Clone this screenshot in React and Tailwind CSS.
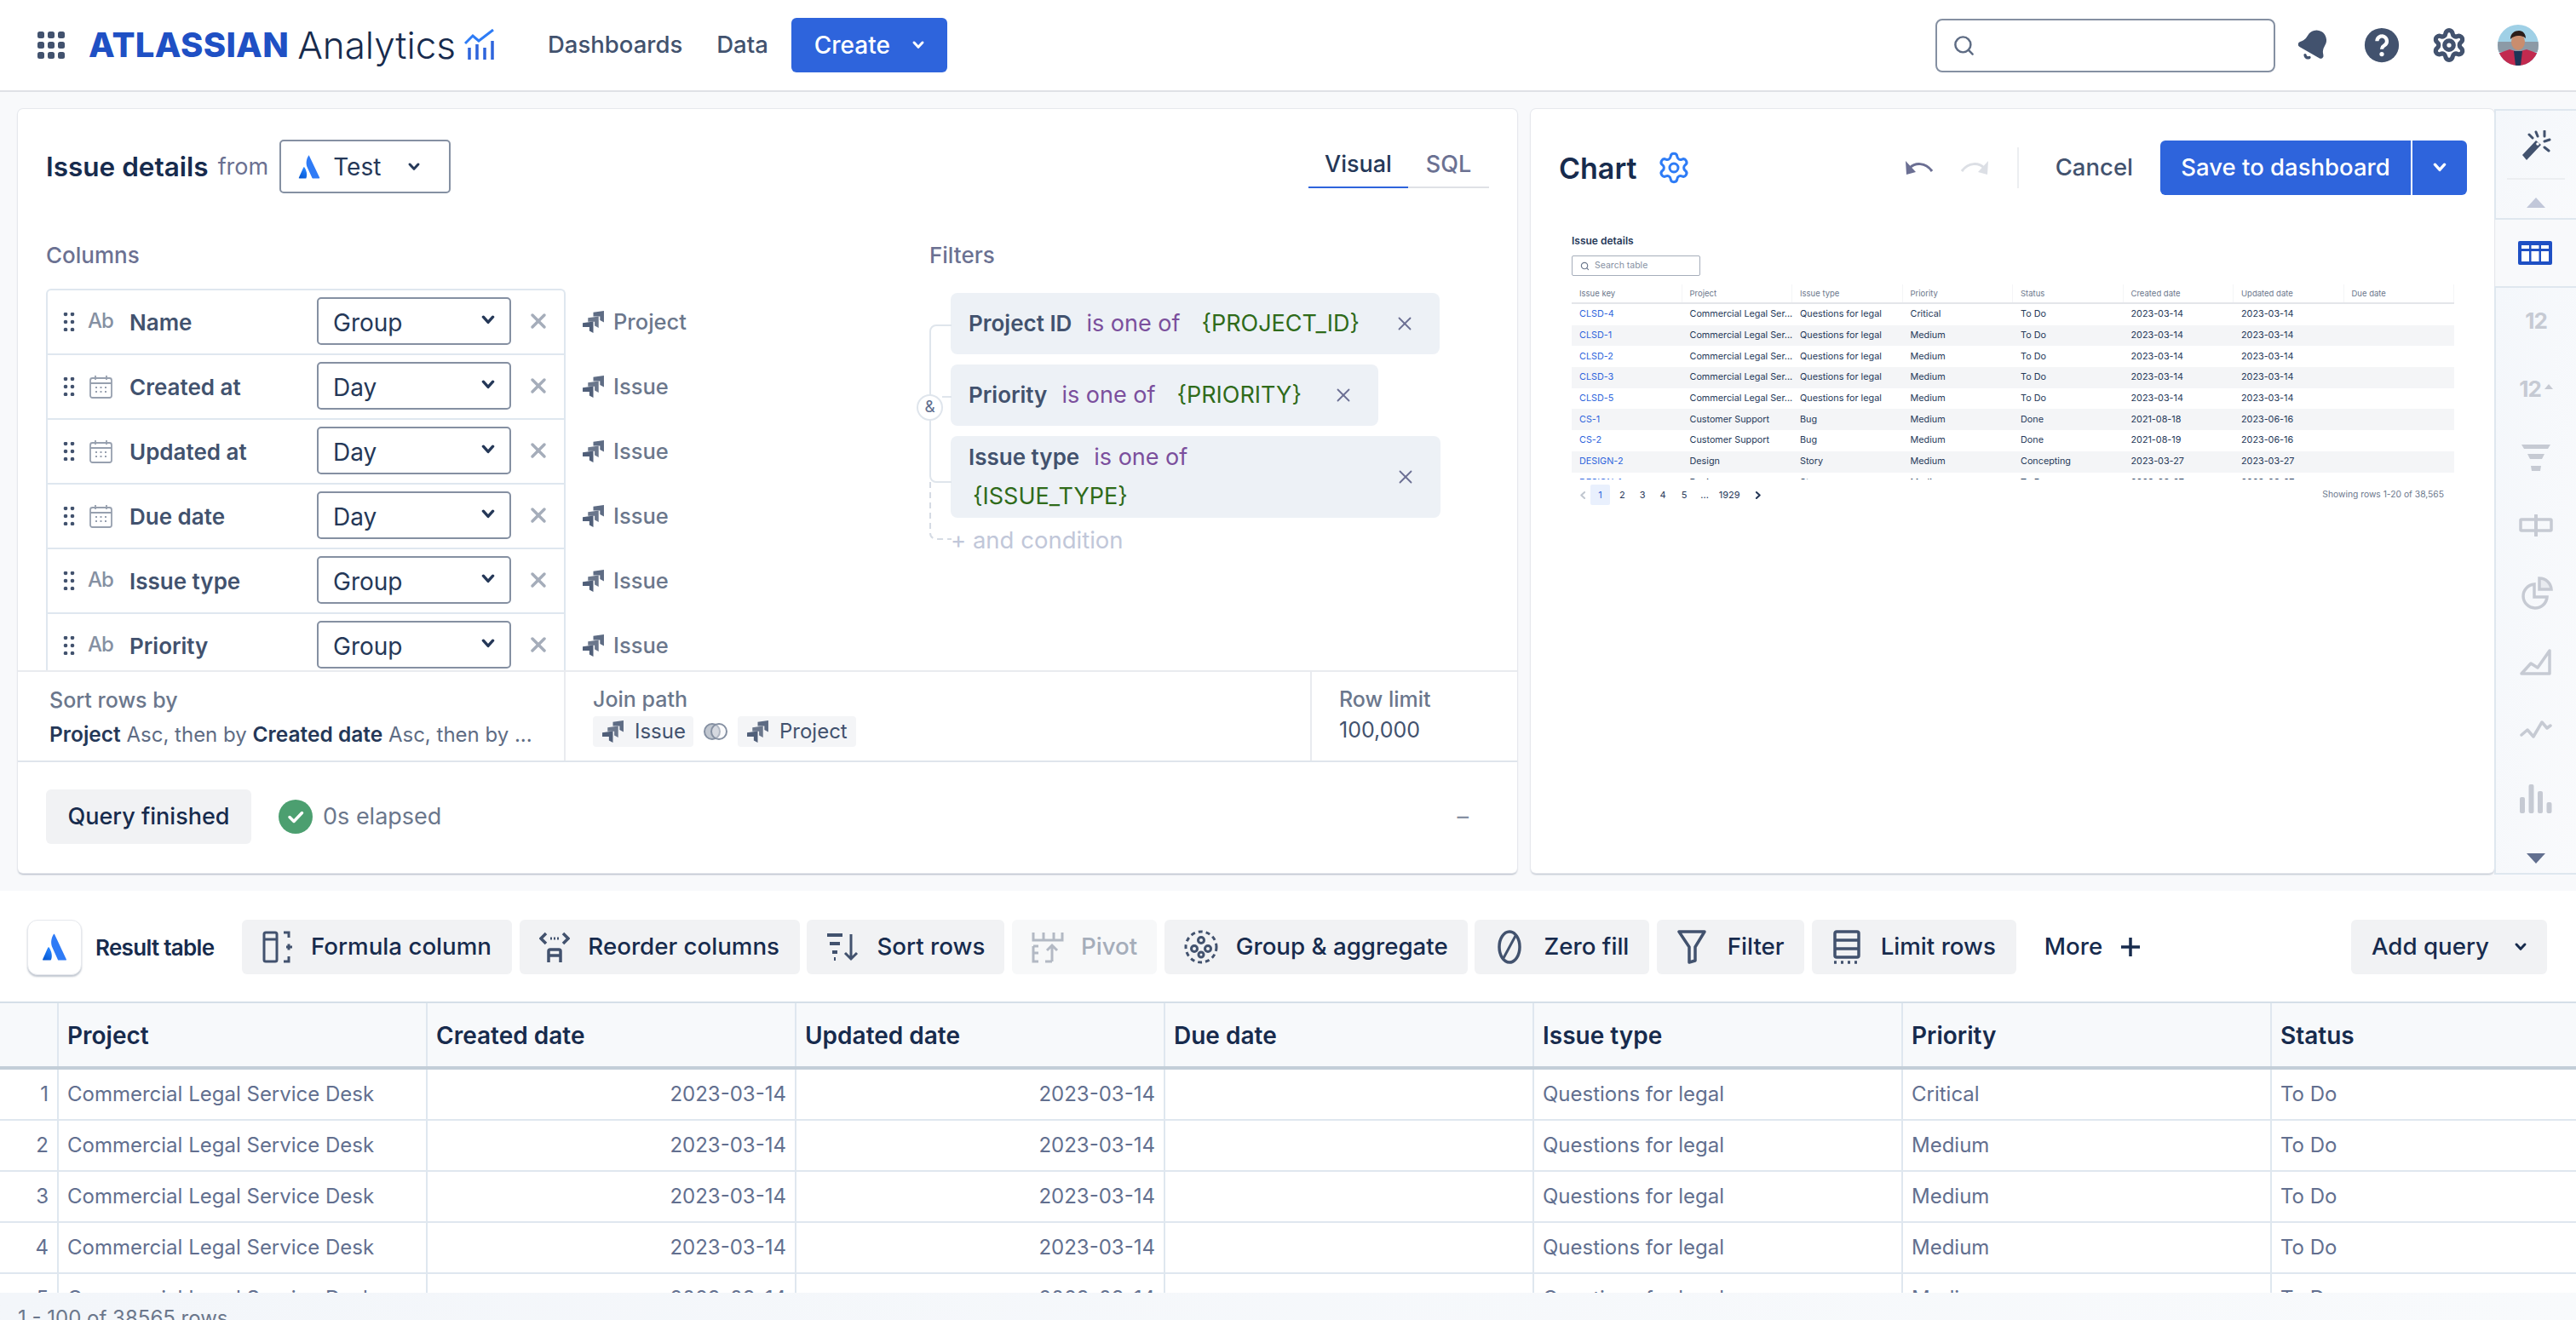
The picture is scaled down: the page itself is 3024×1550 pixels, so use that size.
import { Bell, Search, Settings, X } from "lucide-react";

const ink = "#172b4d"

function Chevron({ className = "", color = "currentColor", w = 14 }) {
    return (
        <svg width={w} height={w * 0.7} viewBox="0 0 14 10" className={className} fill="none">
            <path d="M2 2l5 5.5L12 2" stroke={color} strokeWidth="3" strokeLinecap="round" strokeLinejoin="round" />
        </svg>
    )
}

function AtlassianMark({ size = 30 }) {
    return (
        <svg width={size} height={size} viewBox="0 0 30 30">
            <defs>
                <linearGradient id="am" x1="0" y1="1" x2="0.5" y2="0">
                    <stop offset="0" stopColor="#0052cc" />
                    <stop offset="1" stopColor="#2684ff" />
                </linearGradient>
            </defs>
            <path d="M9 15.5c-.4-.5-1-.4-1.300.2L2 28.500c-.2.5.1 1 .6 1h8c.3 0 .5-.2.6-.4 1.700-3.600.7-9.300-2.200-13.600z" fill="url(#am)" />
            <path d="M14 1c-3.100 5-3.300 10.600-1.200 15l5.900 13c.1.300.3.500.6.500h8.100c.5 0 .9-.5.6-1L15 1c-.2-.5-.8-.5-1 0z" fill="#2f7bf6" />
        </svg>
    )
}

function JiraIcon({ className = "" }) {
    return (
        <svg width="25" height="26" viewBox="0 0 70 73" className={className}>
            <path d="M35 5l35-5v38l-13-7V18H35z" fill="#5e6c84" />
            <path d="M17.500 23l35-5v38l-13-7V36H17.500z" fill="#6b778c" />
            <path d="M0 40l35-5v38l-13-7V53H0z" fill="#505f79" />
        </svg>
    )
}

function Grip() {
    return (
        <svg width="14" height="22" viewBox="0 0 14 22" fill="#42526e">
            {[2, 11, 20].map(y => (
                <g key={y}>
                    <circle cx="3" cy={y} r="2.300" />
                    <circle cx="11" cy={y} r="2.300" />
                </g>
            ))}
        </svg>
    )
}

function CalendarIcon() {
    return (
        <svg width="27" height="28" viewBox="0 0 27 28" fill="none" stroke="#97a0af" strokeWidth="1.800">
            <rect x="1" y="4" width="25" height="23" rx="2.500" />
            <path d="M1 10h25M7 1v5M20 1v5" />
            <path d="M7 15h2M12.500 15h2M18 15h2M7 20h2M12.500 20h2M18 20h2" strokeDasharray="2 1" />
        </svg>
    )
}

const columnRows = [
    { name: "Name", kind: "ab", agg: "Group", table: "Project" },
    { name: "Created at", kind: "date", agg: "Day", table: "Issue" },
    { name: "Updated at", kind: "date", agg: "Day", table: "Issue" },
    { name: "Due date", kind: "date", agg: "Day", table: "Issue" },
    { name: "Issue type", kind: "ab", agg: "Group", table: "Issue" },
    { name: "Priority", kind: "ab", agg: "Group", table: "Issue" },
]

function ColumnRow({ row, first }) {
    return (
        <div className="flex items-center">
            <div className={`w-[610px] h-[76px] shrink-0 flex items-center border-2 border-b-0 border-[#dfe7ef] pl-[18px] ${first ? "rounded-t-md" : ""}`}>
                <Grip />
                <div className="w-[28px] ml-[16px] flex justify-center">
                    {row.kind === "ab"
                        ? <span className="text-[24px] font-medium text-[#8590a2] tracking-[-1px] -mt-[3px]">Ab</span>
                        : <CalendarIcon />}
                </div>
                <span className="ml-[20px] w-[220px] text-[26px] font-semibold text-[#42526e]">{row.name}</span>
                <div className="w-[228px] h-[56px] -mt-[2px] border-2 border-[#8590a2] rounded-[5px] flex items-center justify-between pl-[17px] pr-[17px]">
                    <span className="text-[28px] text-[#253858] mt-[3px]">{row.agg}</span>
                    <Chevron color="#253858" w={16} className="-mt-[2px]" />
                </div>
                <X size={28} strokeWidth={3} className="ml-[18px] -mt-[2px] text-[#a5adba]" />
            </div>
            <JiraIcon className="ml-[20px] mt-[1px]" />
            <span className="ml-[11px] text-[25.500px] font-medium text-[#6b778c] mt-[2px]">{row.table}</span>
        </div>
    )
}

function FilterChip({ field, value, w, wrap }) {
    return (
        <div className={`${w} bg-[#edf1f6] rounded-lg flex items-center justify-between pl-[21px] pr-[28px] ${wrap ? "h-[96px]" : "h-[72px]"}`}>
            <div className="text-[27px]">
                <div>
                    <span className="font-semibold text-[26px] text-[#42526e]">{field}</span>
                    <span className="ml-[17px] text-[#7b4f9d]">is one of</span>
                    {!wrap && <span className="ml-[25px] text-[#2f6b1a]">{value}</span>}
                </div>
                {wrap && <div className="ml-[5px] mt-[6px] text-[#2f6b1a]">{value}</div>}
            </div>
            <X size={26} strokeWidth={1.700} className="text-[#6b6f93]" />
        </div>
    )
}

function Filters() {
    return (
        <div className="relative w-[640px] pl-[25px]">
            <svg className="absolute left-0 top-0" width="30" height="300" viewBox="0 0 30 300" fill="none">
                <path d="M26 38H8a7 7 0 0 0-7 7v170a7 7 0 0 0 7 7h18" stroke="#dfe5ec" strokeWidth="2" />
                <path d="M15 122h11" stroke="#dfe5ec" strokeWidth="2" />
                <path d="M1 222v60a7 7 0 0 0 7 7h18" stroke="#d5dbe4" strokeWidth="2" strokeDasharray="7 5" />
            </svg>
            <div className="absolute left-[-15px] top-[119px] w-[31px] h-[31px] rounded-full bg-white border-2 border-[#dfe5ec] flex items-center justify-center text-[19px] text-[#626f8f]">&amp;</div>
            <div className="flex flex-col gap-[12px] items-start">
                <FilterChip field="Project ID" value="{PROJECT_ID}" w="w-[574px]" />
                <FilterChip field="Priority" value="{PRIORITY}" w="w-[502px]" />
                <FilterChip field="Issue type" value="{ISSUE_TYPE}" w="w-[575px]" wrap />
            </div>
            <div className="mt-[9px] text-[27.500px] text-[#c1c7d9] leading-[34px]">+ and condition</div>
        </div>
    )
}

function QueryPanel() {
    return (
        <div className="w-[1760px] h-[897px] shrink-0 bg-white rounded-md shadow-[0_0_0_1px_#e6e8ed,0_2px_2px_rgba(9,30,66,0.3)] flex flex-col">
            <div className="h-[659px] overflow-hidden px-[33px] pt-[36px]">
                <div className="flex items-center justify-between">
                    <div className="flex items-center">
                        <span className="text-[31.500px] font-semibold text-[#172b4d]">Issue details</span>
                        <span className="ml-[11px] text-[27px] text-[#6b7192] mt-[2px]">from</span>
                        <div className="ml-[13px] w-[201px] h-[63px] border-2 border-[#8590a2] rounded-[5px] flex items-center pl-[19px]">
                            <AtlassianMark size={28} />
                            <span className="ml-[14px] text-[28px] text-[#253858]">Test</span>
                            <Chevron color="#253858" className="ml-[32px]" />
                        </div>
                    </div>
                    <div className="flex mt-[2px] text-[27px] font-medium">
                        <div className="w-[117px] h-[48px] border-b-2 border-[#2e64dc] text-[#253858] text-center">Visual</div>
                        <div className="w-[95px] h-[48px] border-b-2 border-[#dfe1e6] text-[#6b7192] text-center">SQL</div>
                    </div>
                </div>
                <div className="flex mt-[57px]">
                    <div className="w-[1037px] shrink-0">
                        <div className="text-[26px] font-medium text-[#6b7192] leading-[32px]">Columns</div>
                        <div className="mt-[23px]">
                            {columnRows.map((r, i) => <ColumnRow key={r.name} row={r} first={i === 0} />)}
                        </div>
                    </div>
                    <div>
                        <div className="text-[26px] font-medium text-[#6b7192] leading-[32px]">Filters</div>
                        <div className="mt-[28px]"><Filters /></div>
                    </div>
                </div>
            </div>

            <div className="h-[108px] flex border-y-2 border-[#dfe5ec] border-t-[#e9ebef]">
                <div className="w-[643px] border-r-2 border-[#e9ebef] pl-[37px] pt-[17px]">
                    <div className="text-[25px] font-medium text-[#6b778c] leading-[32px]">Sort rows by</div>
                    <div className="mt-[8px] text-[24px] text-[#5e6c84] leading-[32px] whitespace-nowrap">
                        <b className="font-semibold text-[24.500px] text-[#253858]">Project</b> Asc, then by <b className="font-semibold text-[24.500px] text-[#253858]">Created date</b> Asc, then by ...
                    </div>
                </div>
                <div className="w-[876px] border-r-2 border-[#e9ebef] pl-[32px] pt-[16px]">
                    <div className="text-[25px] font-medium text-[#6b778c] leading-[32px]">Join path</div>
                    <div className="flex items-center mt-[4px]">
                        <div className="h-[36px] w-[118px] bg-[#f4f5f7] rounded flex items-center pl-[11px] text-[24px] text-[#42526e]">
                            <JiraIcon /><span className="ml-[13px]">Issue</span>
                        </div>
                        <svg width="30" height="24" viewBox="0 0 30 24" fill="none" className="mx-[11px]">
                            <circle cx="11" cy="12" r="9" stroke="#8590a2" strokeWidth="2" fill="#c1c7d0" />
                            <circle cx="19" cy="12" r="9" stroke="#8590a2" strokeWidth="2" fill="#f4f5f7" fillOpacity="0.4" />
                        </svg>
                        <div className="h-[36px] w-[139px] bg-[#f4f5f7] rounded flex items-center pl-[11px] text-[24px] text-[#42526e]">
                            <JiraIcon /><span className="ml-[13px]">Project</span>
                        </div>
                    </div>
                </div>
                <div className="pl-[32px] pt-[16px]">
                    <div className="text-[25px] font-medium text-[#6b778c] leading-[32px]">Row limit</div>
                    <div className="mt-[4px] text-[25px] text-[#42526e] leading-[32px]">100,000</div>
                </div>
            </div>

            <div className="flex-1 flex items-center px-[33px] pb-[2px]">
                <div className="w-[241px] h-[64px] bg-[#f1f2f4] rounded-md flex items-center justify-center text-[27px] font-medium text-[#172b4d]">Query finished</div>
                <svg width="40" height="40" viewBox="0 0 40 40" className="ml-[32px]">
                    <circle cx="20" cy="20" r="20" fill="#4c9f70" />
                    <path d="M13 20.500l5 5 9.500-10" fill="none" stroke="#fff" strokeWidth="3.500" strokeLinecap="round" strokeLinejoin="round" />
                </svg>
                <span className="ml-[12px] text-[27px] text-[#6b778c]">0s elapsed</span>
                <span className="ml-auto mr-[24px] text-[27px] text-[#8590a2]">–</span>
            </div>
        </div>
    )
}

const previewCols = ["Issue key", "Project", "Issue type", "Priority", "Status", "Created date", "Updated date", "Due date"]
const legal = "Commercial Legal Ser..."
const q = "Questions for legal"
const previewRows = [
    ["CLSD-4", legal, q, "Critical", "To Do", "2023-03-14", "2023-03-14"],
    ["CLSD-1", legal, q, "Medium", "To Do", "2023-03-14", "2023-03-14"],
    ["CLSD-2", legal, q, "Medium", "To Do", "2023-03-14", "2023-03-14"],
    ["CLSD-3", legal, q, "Medium", "To Do", "2023-03-14", "2023-03-14"],
    ["CLSD-5", legal, q, "Medium", "To Do", "2023-03-14", "2023-03-14"],
    ["CS-1", "Customer Support", "Bug", "Medium", "Done", "2021-08-18", "2023-06-16"],
    ["CS-2", "Customer Support", "Bug", "Medium", "Done", "2021-08-19", "2023-06-16"],
    ["DESIGN-2", "Design", "Story", "Medium", "Concepting", "2023-03-27", "2023-03-27"],
    ["DESIGN-1", "Design", "Story", "Medium", "To Do", "2023-03-27", "2023-03-27"],
]

function ChartPreview() {
    return (
        <div className="ml-[16px] w-[1036px] mt-[45px]">
            <div className="text-[12px] leading-[18px] font-semibold text-[#253858]">Issue details</div>
            <div className="mt-[8px] w-[151px] h-[24px] border border-[#a5adba] rounded-[2px] flex items-center pl-[9px] text-[10.500px] text-[#8590a2]">
                <Search size={11} strokeWidth={2.500} className="text-[#6b778c]" />
                <span className="ml-[6px]">Search table</span>
            </div>
            <div className="mt-[10px] h-[23px] flex border-b-2 border-[#e4e6ea] text-[9.500px] text-[#6b778c]">
                {previewCols.map(c => (
                    <div key={c} className="w-[129.500px] shrink-0 pl-[9px] pt-[4px] border-r border-[#f4f5f7]">{c}</div>
                ))}
            </div>
            <div className="h-[206px] overflow-hidden">
                {previewRows.map((r, i) => (
                    <div key={r[0]} className={`h-[24.700px] flex items-center text-[10.800px] text-[#253858] ${i % 2 ? "bg-[#f4f5f7]" : ""}`}>
                        {r.map((c, j) => (
                            <div key={j} className={`w-[129.500px] shrink-0 pl-[9px] whitespace-nowrap ${j === 0 ? "text-[#2e64dc]" : ""}`}>{c}</div>
                        ))}
                    </div>
                ))}
            </div>
            <div className="mt-[6px] h-[24px] flex items-center text-[11px] text-[#253858]">
                <Chevron w={10} color="#c1c7d0" className="ml-[8px] rotate-90" />
                <div className="ml-[4px] w-[23px] h-[24px] bg-[#e9f0fd] rounded-[2px] flex items-center justify-center text-[#2e64dc]">1</div>
                <span className="ml-[11px]">2</span>
                <span className="ml-[17px]">3</span>
                <span className="ml-[17px]">4</span>
                <span className="ml-[18px]">5</span>
                <span className="ml-[16px]">...</span>
                <span className="ml-[12px]">1929</span>
                <Chevron w={10} color="#253858" className="ml-[16px] -rotate-90" />
                <span className="ml-auto mr-[12px] text-[10.300px] text-[#6b778c]">Showing rows 1-20 of 38,565</span>
            </div>
        </div>
    )
}

function ChartPanel() {
    return (
        <div className="ml-[16px] w-[1131px] h-[897px] shrink-0 bg-white rounded-md shadow-[0_0_0_1px_#e6e8ed,0_2px_2px_rgba(9,30,66,0.25)] px-[32px] pt-[37px]">
            <div className="flex items-center h-[64px]">
                <span className="text-[34px] font-semibold text-[#172b4d] ml-[1px]">Chart</span>
                <Settings size={40} strokeWidth={1.800} className="ml-[23px] text-[#2e7cf6]" />
                <svg width="33" height="18" viewBox="0 0 33 18" className="ml-auto" fill="none">
                    <path d="M6 9c6-6 18-7 26 4" stroke="#6b6f93" strokeWidth="3" />
                    <path d="M1 1l1 16 11-3z" fill="#6b6f93" />
                </svg>
                <svg width="33" height="18" viewBox="0 0 33 18" className="ml-[33px]" fill="none">
                    <path d="M27 9C21 3 9 2 1 13" stroke="#dcdfe5" strokeWidth="3" />
                    <path d="M32 1l-1 16-11-3z" fill="#dcdfe5" />
                </svg>
                <div className="ml-[33px] w-[2px] h-[48px] bg-[#eceef1]" />
                <span className="ml-[43px] text-[27.500px] font-medium text-[#42526e]">Cancel</span>
                <div className="ml-[32px] flex h-[64px] bg-[#2e64dc] rounded-md text-white">
                    <div className="w-[294px] flex items-center justify-center text-[27.500px] font-medium">Save to dashboard</div>
                    <div className="w-[2px] bg-white" />
                    <div className="w-[64px] flex items-center justify-center"><Chevron color="#fff" w={16} /></div>
                </div>
            </div>
            <ChartPreview />
        </div>
    )
}

function RailItem({ children, h }) {
    return <div className={`${h} flex items-center justify-center`}>{children}</div>
}

function ChartRail() {
    const grey = "#c6cad3"
    return (
        <div className="w-[96px] h-[919px] shrink-0 flex flex-col">
            <div className="h-[130px] mt-[20px] border-2 border-r-0 border-[#dfe7ef] bg-gradient-to-br from-[#f4f7fb] to-[#f9fafc] flex flex-col items-center">
                <svg width="36" height="36" viewBox="0 0 36 36" className="mt-[23px]">
                    <path d="M2 29L18 12l6 5L7 35z" fill="#42526e" />
                    <circle cx="20" cy="16" r="1.800" fill="#fff" />
                    <path d="M18 2l2 5M28 1v6M34 11l-6 2M33 24l-5-4M10 5l4 4" stroke="#42526e" strokeWidth="3" strokeLinecap="round" />
                </svg>
                <div className="mt-[20px] w-[68px] h-[2px] bg-[#eceef1]" />
                <div className="mt-[21px] w-0 h-0 border-x-[11px] border-x-transparent border-b-[12px] border-b-[#c1c7d9]" />
            </div>
            <div className="h-[78px] flex items-center justify-center">
                <svg width="40" height="28" viewBox="0 0 40 28">
                    <rect width="40" height="28" rx="2" fill="#1f50c4" />
                    <path d="M4 5h9v4H4zM15.500 5h9v4h-9zM27 5h9v4h-9zM4 12h9v12H4zM15.500 12h9v12h-9zM27 12h9v12h-9z" fill="#fff" />
                </svg>
            </div>
            <div className="flex-1 border-2 border-r-0 border-[#dfe7ef] bg-gradient-to-br from-[#f4f7fb] to-[#f9fafc] flex flex-col items-center">
                <RailItem h="h-[76px]"><span className="text-[26px] font-bold text-[#c6cad3] tracking-[-1px]">12</span></RailItem>
                <RailItem h="h-[84px]">
                    <span className="text-[26px] font-bold text-[#c6cad3] tracking-[-1px]">12</span>
                    <span className="ml-[4px] mb-[4px] w-0 h-0 border-x-[5px] border-x-transparent border-b-[6px] border-b-[#c6cad3]" />
                </RailItem>
                <RailItem h="h-[80px]">
                    <svg width="36" height="34" viewBox="0 0 36 34" fill={grey}>
                        <path d="M1 1h34l-3 5H4zM8 12h20l-3 6H11zM12 26h12l-1 6H13z" />
                    </svg>
                </RailItem>
                <RailItem h="h-[78px]">
                    <svg width="40" height="26" viewBox="0 0 40 26" fill="none" stroke={grey} strokeWidth="3.500">
                        <rect x="2" y="6" width="36" height="13" rx="1" />
                        <path d="M20 1v24" strokeWidth="4" strokeLinecap="round" />
                    </svg>
                </RailItem>
                <RailItem h="h-[80px]">
                    <svg width="40" height="40" viewBox="0 0 40 40" fill="none" stroke={grey} strokeWidth="3.500">
                        <path d="M18 10a14 14 0 1 0 15 15H18z" />
                        <path d="M24 3a14 14 0 0 1 14 13H24z" fill={grey} fillOpacity="0.3" />
                    </svg>
                </RailItem>
                <RailItem h="h-[82px]">
                    <svg width="38" height="34" viewBox="0 0 38 34" fill="none" stroke={grey} strokeWidth="3.500" strokeLinejoin="round">
                        <path d="M2 31l11-12 8 5L35 4v27z" />
                    </svg>
                </RailItem>
                <RailItem h="h-[76px]">
                    <svg width="38" height="22" viewBox="0 0 38 22" fill="none" stroke={grey} strokeWidth="3.500" strokeLinecap="round" strokeLinejoin="round">
                        <path d="M2 18l7-6 7 8L26 3l6 7 4-3" />
                    </svg>
                </RailItem>
                <RailItem h="h-[88px]">
                    <svg width="38" height="36" viewBox="0 0 38 36" fill={grey}>
                        <rect x="0" y="16" width="6" height="19" rx="2" />
                        <rect x="10.500" y="1" width="6" height="34" rx="2" />
                        <rect x="21" y="9" width="6" height="26" rx="2" />
                        <rect x="31.500" y="22" width="6" height="13" rx="2" />
                    </svg>
                </RailItem>
                <div className="mt-[20px] w-0 h-0 border-x-[11px] border-x-transparent border-t-[12px] border-t-[#626f8f]" />
            </div>
        </div>
    )
}

const tools = [
    { label: "Formula column", w: "w-[317px]", gap: "gap-[21px]", icon: (
        <svg width="36" height="38" viewBox="0 0 36 38" fill="none" stroke="#42526e" strokeWidth="3">
            <rect x="2" y="2" width="15" height="34" rx="2" />
            <path d="M2 10h15M25 2h6v6M25 36h6v-6M28 19h7M31 15.500v7" />
        </svg>
    ) },
    { label: "Reorder columns", w: "w-[329px]", gap: "gap-[21px]", icon: (
        <svg width="36" height="38" viewBox="0 0 36 38" fill="none" stroke="#42526e" strokeWidth="3.500">
            <path d="M8 3L2 9l6 6M28 3l6 6-6 6" />
            <path d="M13 9h2M17 9h2M21 9h2" strokeWidth="3" />
            <path d="M11 37V24a2 2 0 0 1 2-2h10a2 2 0 0 1 2 2v13M11 29h14" />
        </svg>
    ) },
    { label: "Sort rows", w: "w-[232px]", gap: "gap-[21px]", icon: (
        <svg width="38" height="34" viewBox="0 0 38 34" fill="none" stroke="#42526e" strokeWidth="4">
            <path d="M1 3h18M4 13h12M7 23h6" />
            <path d="M9 31h2" />
            <path d="M29 2v29M22 24l7 7 7-7" strokeWidth="3" />
        </svg>
    ) },
    { label: "Pivot", w: "w-[170px]", muted: true, gap: "gap-[20px]", icon: (
        <svg width="38" height="38" viewBox="0 0 38 38" fill="none" stroke="#b3b9c4" strokeWidth="3">
            <path d="M2 2v9h34V2M14 2v9M26 2v9M2 18h6M2 18v18h6M2 26h6" />
            <path d="M24 36V17M18 23l6-6 6 6M24 36h-8" />
        </svg>
    ) },
    { label: "Group & aggregate", w: "w-[356px]", gap: "gap-[21px]", icon: (
        <svg width="40" height="40" viewBox="0 0 40 40" fill="none" stroke="#42526e" strokeWidth="3">
            <circle cx="20" cy="20" r="18" strokeDasharray="5 4" />
            <circle cx="20" cy="12" r="3.500" />
            <circle cx="12" cy="22" r="3.500" />
            <circle cx="28" cy="22" r="3.500" />
            <circle cx="20" cy="29" r="3" />
        </svg>
    ) },
    { label: "Zero fill", w: "w-[205px]", gap: "gap-[25px]", icon: (
        <svg width="32" height="40" viewBox="0 0 32 40" fill="none" stroke="#42526e" strokeWidth="3.500">
            <ellipse cx="16" cy="20" rx="12" ry="18" />
            <path d="M23 7L9 33" strokeWidth="3" />
        </svg>
    ) },
    { label: "Filter", w: "w-[173px]", gap: "gap-[25px]", icon: (
        <svg width="34" height="40" viewBox="0 0 34 40" fill="none" stroke="#42526e" strokeWidth="3.500" strokeLinejoin="round">
            <path d="M2 2h30L21 20v16l-7 2V20z" />
        </svg>
    ) },
    { label: "Limit rows", w: "w-[240px]", gap: "gap-[23px]", icon: (
        <svg width="34" height="40" viewBox="0 0 34 40" fill="none" stroke="#42526e" strokeWidth="3.500">
            <rect x="3" y="2" width="28" height="30" rx="2" />
            <path d="M3 12h28M3 22h28" />
            <path d="M2 38h30" strokeDasharray="3 5" />
        </svg>
    ) },
]

function Toolbar() {
    return (
        <div className="h-[130px] flex items-center pl-[32px] pr-[34px] pt-[2px]">
            <div className="w-[64px] h-[65px] rounded-xl bg-white border border-[#e6e8ed] shadow-[0_2px_2px_rgba(9,30,66,0.25)] flex items-center justify-center">
                <AtlassianMark size={32} />
            </div>
            <span className="ml-[16px] w-[172px] text-[26px] font-semibold text-[#172b4d] tracking-[-0.7px]">Result table</span>
            <div className="flex gap-[8.700px]">
                {tools.map(t => (
                    <div key={t.label} className={`${t.w} ${t.gap} h-[64px] rounded-md flex items-center justify-center text-[27.700px] font-medium ${t.muted ? "bg-[#f7f8f9] text-[#a5adba]" : "bg-[#f1f2f4] text-[#172b4d]"}`}>
                        {t.icon}
                        <span>{t.label}</span>
                    </div>
                ))}
            </div>
            <span className="ml-[33px] text-[27.700px] font-medium text-[#172b4d]">More</span>
            <svg width="24" height="24" viewBox="0 0 24 24" className="ml-[21px]">
                <path d="M12 1v22M1 12h22" stroke="#172b4d" strokeWidth="3.500" />
            </svg>
            <div className="ml-auto w-[230px] h-[64px] rounded-md bg-[#f1f2f4] flex items-center justify-center gap-[30px] text-[27.700px] font-medium text-[#172b4d]">
                Add query
                <Chevron color="#172b4d" />
            </div>
        </div>
    )
}

const headCols = ["Project", "Created date", "Updated date", "Due date", "Issue type", "Priority", "Status"]
const resultRows = [
    ["1", "Critical"],
    ["2", "Medium"],
    ["3", "Medium"],
    ["4", "Medium"],
    ["5", "Medium"],
]

function ResultTable() {
    const cell = "w-[433px] shrink-0 border-r-2 border-[#dfe7ef] px-[10px]"
    return (
        <div className="h-[342px] overflow-hidden border-t-2 border-[#d5dfe8]">
            <div className="h-[78px] flex items-center bg-[#f7f9fb] border-b-4 border-[#c3ced8] text-[28px] font-semibold text-[#172b4d]">
                <div className="w-[69px] h-full shrink-0 border-r-2 border-[#dfe7ef]" />
                {headCols.map(c => (
                    <div key={c} className={`${cell} h-full flex items-center`}>
                        <span className="mt-[2px]">{c}</span>
                    </div>
                ))}
            </div>
            {resultRows.map(([n, pr]) => (
                <div key={n} className="h-[60px] flex items-center border-b-2 border-[#dfe7ef] text-[24px] text-[#626f8f]">
                    <div className="w-[69px] h-full shrink-0 border-r-2 border-[#dfe7ef] flex items-center justify-end pr-[10px]">{n}</div>
                    <div className={`${cell} h-full flex items-center`}>Commercial Legal Service Desk</div>
                    <div className={`${cell} h-full flex items-center justify-end`}>2023-03-14</div>
                    <div className={`${cell} h-full flex items-center justify-end`}>2023-03-14</div>
                    <div className={`${cell} h-full`} />
                    <div className={`${cell} h-full flex items-center`}>Questions for legal</div>
                    <div className={`${cell} h-full flex items-center`}>{pr}</div>
                    <div className={`${cell} h-full flex items-center border-r-0`}>To Do</div>
                </div>
            ))}
        </div>
    )
}

function Avatar() {
    return (
        <svg width="48" height="48" viewBox="0 0 48 48">
            <defs>
                <clipPath id="av"><circle cx="24" cy="24" r="24" /></clipPath>
            </defs>
            <g clipPath="url(#av)">
                <rect width="48" height="48" fill="#9fd0e6" />
                <rect y="20" width="48" height="12" fill="#8c9aa6" />
                <path d="M0 48V34l14-5 10 3 10-3 14 5v14z" fill="#c22a4f" />
                <path d="M19 31h10l-2 17h-6z" fill="#1d3557" />
                <ellipse cx="24" cy="20" rx="8" ry="10" fill="#c98d6e" />
                <path d="M15 17c0-7 5-10 10-10s8 4 8 9c-3-3-6-3-9-3s-6 1-9 4z" fill="#2b1d1a" />
            </g>
        </svg>
    )
}

function TopBar() {
    return (
        <div className="h-[108px] border-b-2 border-[#dfe1e6] flex items-center pl-[44px] pr-[44px] bg-white">
            <svg width="32" height="32" viewBox="0 0 32 32" fill="#42526e">
                {[0, 12, 24].map(y => [0, 12, 24].map(x => (
                    <rect key={`${x}-${y}`} x={x} y={y} width="8" height="8" rx="2.500" />
                )))}
            </svg>
            <span className="ml-[28px] text-[40px] font-extrabold text-[#1f50c4] tracking-[0.3px] leading-none">ATLASSIAN</span>
            <span className="ml-[10px] text-[44px] font-light text-[#172b4d] leading-none">Analytics</span>
            <svg width="36" height="38" viewBox="0 0 36 38" className="ml-[10px]" fill="none">
                <path d="M1 17L10 8l7 6L34 1" stroke="#2e7cf6" strokeWidth="3" />
                <path d="M6 36V22M15 36V18M24 36V22M33 36V14" stroke="#2e64dc" strokeWidth="3.500" />
            </svg>
            <span className="ml-[62px] text-[27.500px] font-medium text-[#42526e]">Dashboards</span>
            <span className="ml-[40px] text-[27.500px] font-medium text-[#42526e]">Data</span>
            <div className="ml-[27px] w-[183px] h-[64px] bg-[#2e64dc] rounded-md flex items-center justify-center gap-[26px] text-[28px] font-medium text-white">
                Create
                <Chevron color="#fff" />
            </div>
            <div className="ml-auto w-[399px] h-[63px] border-2 border-[#8590a2] rounded-lg flex items-center pl-[18px]">
                <Search size={27} strokeWidth={2.200} className="text-[#5e6c84]" />
            </div>
            <Bell size={40} fill="#42526e" strokeWidth={2} className="ml-[25px] text-[#42526e] rotate-[30deg]" />
            <svg width="42" height="42" viewBox="0 0 24 24" className="ml-[39px]">
                <circle cx="12" cy="12" r="11.500" fill="#42526e" />
                <path d="M8.800 9.300a3.300 3.300 0 1 1 5.200 2.700c-1.200.8-2 1.300-2 2.700" fill="none" stroke="#fff" strokeWidth="2.400" />
                <circle cx="12" cy="18" r="1.500" fill="#fff" />
            </svg>
            <Settings size={42} strokeWidth={3} className="ml-[37px] text-[#42526e]" />
            <div className="ml-[36px]"><Avatar /></div>
        </div>
    )
}

export default function App() {
    return (
        <div className="w-[3024px] h-[1550px] overflow-hidden bg-white font-['Inter',sans-serif]" style={{ color: ink }}>
            <TopBar />
            <div className="h-[938px] bg-[#f8f9fb] flex pl-[21px]">
                <div className="pt-[20px] flex">
                    <QueryPanel />
                    <ChartPanel />
                </div>
                <ChartRail />
            </div>
            <Toolbar />
            <ResultTable />
            <div className="h-[40px] bg-gradient-to-r from-[#f3f6fa] to-[#f8fafc] pl-[21px] pt-[15px] text-[24px] text-[#6b778c] leading-[30px]">1 - 100 of 38565 rows</div>
        </div>
    )
}
